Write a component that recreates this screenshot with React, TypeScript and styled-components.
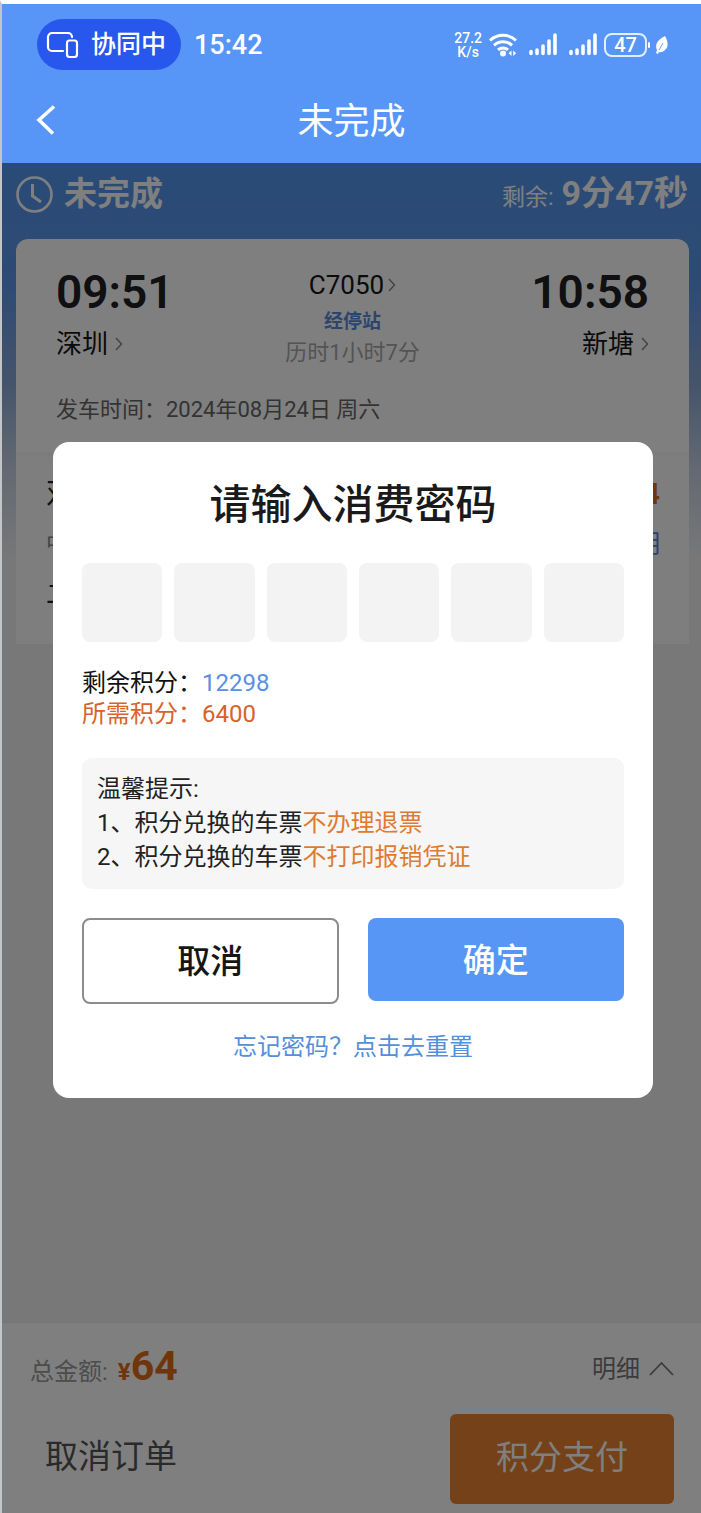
import React from 'react';
import styled, { createGlobalStyle } from 'styled-components';

const GlobalStyle = createGlobalStyle`
  * { box-sizing: border-box; }
  body { margin: 0; background: #fff; }
  body, button, input { font-family: Roboto, "Noto Sans CJK SC", sans-serif; }
  button { border: 0; padding: 0; background: none; color: inherit; cursor: pointer; }
  h1, h2, p { margin: 0; }
`;

const Screen = styled.div`
  display: flex;
  flex-direction: column;
  min-height: 100vh;
  border-top: 4px solid #fff;
  border-left: 2px solid #c3c6c8;
`;

const Top = styled.header`
  height: 159px;
  background: #5796f7;
  color: #fff;
`;

const StatusBar = styled.div`
  display: flex;
  align-items: center;
  justify-content: space-between;
  padding: 15px 33px 0 35px;
`;

const StatusGroup = styled.div<{ $gap: number }>`
  display: flex;
  align-items: center;
  gap: ${p => p.$gap}px;
`;

const SyncPill = styled.div`
  display: flex;
  align-items: center;
  gap: 12px;
  height: 51px;
  padding: 0 15px 0 9px;
  border-radius: 26px;
  background: #2857ee;
  font-size: 25px;
  font-weight: 500;
  line-height: 34px;
`;

const Clock = styled.span`
  font-size: 27px;
  font-weight: 500;
  line-height: 34px;
`;

const Speed = styled.span`
  display: flex;
  flex-direction: column;
  font-size: 14px;
  font-weight: 500;
  line-height: 14px;
  text-align: center;
`;

const Battery = styled.span`
  display: flex;
  align-items: center;
  gap: 1px;
`;

const BatteryBody = styled.span`
  width: 43px;
  height: 24px;
  border: 2px solid #e3eeff;
  border-radius: 8px;
  font-size: 20px;
  font-weight: 500;
  line-height: 21px;
  text-align: center;
`;

const BatteryNub = styled.span`
  width: 2px;
  height: 6px;
  border-radius: 1px;
  background: #fff;
`;

const NavBar = styled.div`
  display: grid;
  grid-template-columns: 66px 1fr 66px;
  align-items: center;
  height: 100px;
`;

const BackButton = styled.button`
  display: flex;
  padding-left: 33px;
`;

const NavTitle = styled.h1`
  padding-top: 4px;
  font-size: 36px;
  font-weight: 400;
  line-height: 48px;
  text-align: center;
`;

const Content = styled.main`
  position: relative;
  display: flex;
  flex: 1;
  flex-direction: column;
  background: linear-gradient(#5596f0 0, #5a96e8 120px, #8aa8d6 220px, #c4d0e4 300px, #f1f1f1 400px);
`;

const StateRow = styled.div`
  display: flex;
  align-items: center;
  justify-content: space-between;
  height: 76px;
  padding: 0 13px 14px 14px;
  color: #fff;
`;

const State = styled.div`
  display: flex;
  align-items: center;
  gap: 11px;
  font-size: 33px;
  font-weight: 700;
  line-height: 44px;
`;

const Remaining = styled.div`
  display: flex;
  align-items: baseline;
  gap: 8px;
  padding-top: 2px;
  font-size: 23px;
  line-height: 44px;

  strong {
    font-size: 34px;
  }
`;

const Card = styled.section<{ $kind: 'trip' | 'person' }>`
  margin: 0 12px 0 14px;
  padding: ${p => (p.$kind === 'trip' ? '28px 40px 0' : '18px 29px 0 30px')};
  height: ${p => (p.$kind === 'trip' ? 217 : 188)}px;
  border-radius: ${p => (p.$kind === 'trip' ? '12px 12px 0 0' : '0')};
  border-bottom: 4px solid ${p => (p.$kind === 'trip' ? '#f8f8f8' : '#fdfdfd')};
  background: ${p => (p.$kind === 'trip' ? '#fff' : '#fdfdfd')};
`;

const Trip = styled.div`
  display: flex;
  justify-content: space-between;
`;

const Stop = styled.div<{ $end?: boolean }>`
  display: flex;
  flex-direction: column;
  align-items: ${p => (p.$end ? 'flex-end' : 'flex-start')};
`;

const Time = styled.strong`
  color: #202024;
  font-size: 46px;
  font-weight: 600;
  line-height: 50px;
`;

const StationButton = styled.button`
  display: flex;
  align-items: center;
  gap: 7px;
  margin-top: 9px;
  color: #161616;
  font-size: 26px;
  line-height: 36px;
`;

const TrainInfo = styled.div`
  display: flex;
  flex-direction: column;
  align-items: center;
  color: #a8a8a8;
  font-size: 22px;
  line-height: 32px;
`;

const TrainButton = styled.button`
  display: flex;
  align-items: center;
  gap: 4px;
  color: #161616;
  font-size: 26px;
  line-height: 36px;
`;

const ViaButton = styled.button`
  padding: 5px 0 1px;
  color: #578bdc;
  font-size: 19px;
  font-weight: 700;
  line-height: 28px;
`;

const Depart = styled.p`
  margin-top: 25px;
  color: #666;
  font-size: 22px;
  line-height: 32px;
`;

const PersonRow = styled.div<{ $size: number; $color: string }>`
  display: flex;
  justify-content: space-between;
  height: 50px;
  color: ${p => p.$color};
  font-size: ${p => p.$size}px;
  line-height: 40px;
`;

const Price = styled.strong`
  color: #dd6c12;
`;

const RuleLink = styled.a`
  color: #4c86dd;
  font-size: 24px;
  text-decoration: none;
`;

const Bottom = styled.footer`
  margin-top: auto;
  padding: 0 27px 9px 28px;
  background: #fff;
  border-top: 1px solid #eaeaea;
`;

const TotalRow = styled.div`
  display: flex;
  align-items: center;
  justify-content: space-between;
  height: 91px;
`;

const Total = styled.div`
  display: flex;
  align-items: baseline;
  color: #999;
  font-size: 24px;
  line-height: 44px;
`;

const Amount = styled.strong<{ $size: number }>`
  color: #dc6c14;
  font-size: ${p => p.$size}px;

  &:first-of-type {
    margin-left: 10px;
  }
`;

const DetailButton = styled.button`
  display: flex;
  align-items: center;
  gap: 9px;
  color: #777;
  font-size: 24px;
  line-height: 32px;
`;

const ActionRow = styled.div`
  display: flex;
  align-items: center;
  justify-content: space-between;
`;

const CancelOrder = styled.button`
  padding: 0 15px 4px;
  color: #555;
  font-size: 33px;
  line-height: 44px;
`;

const PayButton = styled.button`
  width: 224px;
  height: 90px;
  padding-bottom: 8px;
  border-radius: 6px;
  background: #e88232;
  color: #fff;
  font-size: 33px;
`;

const Overlay = styled.div`
  position: absolute;
  inset: 0;
  padding: 279px 48px 0 51px;
  background: rgba(0, 0, 0, 0.5);
`;

const Dialog = styled.section`
  padding: 37px 29px 34px;
  border-radius: 16px;
  background: #fff;
`;

const DialogTitle = styled.h2`
  color: #1a1a1a;
  font-size: 41px;
  font-weight: 500;
  line-height: 52px;
  text-align: center;
`;

const PinRow = styled.div`
  display: grid;
  grid-template-columns: repeat(6, 1fr);
  gap: 12px;
  margin-top: 32px;
`;

const PinInput = styled.input`
  width: 100%;
  height: 79px;
  border: 0;
  border-radius: 8px;
  background: #f3f3f3;
  font-size: 34px;
  text-align: center;
`;

const Points = styled.div`
  margin-top: 26px;
  font-size: 24px;
  line-height: 31px;
`;

const PointLine = styled.p<{ $color: string }>`
  color: ${p => p.$color};
`;

const Blue = styled.span`
  color: #5b8fe4;
`;

const Tips = styled.div`
  margin-top: 28px;
  padding: 14px 15px 15px;
  border-radius: 10px;
  background: #f6f6f6;
  color: #222;
  font-size: 24px;
  line-height: 34px;
`;

const Warn = styled.span`
  color: #df7b30;
`;

const Choices = styled.div`
  display: grid;
  grid-template-columns: 1fr 1fr;
  align-items: start;
  gap: 29px;
  margin-top: 29px;
`;

const Choice = styled.button<{ $primary?: boolean }>`
  height: ${p => (p.$primary ? 83 : 86)}px;
  padding-bottom: 4px;
  border: ${p => (p.$primary ? '0' : '2px solid #8c8c8c')};
  border-radius: 8px;
  background: ${p => (p.$primary ? '#5796f4' : '#fff')};
  color: ${p => (p.$primary ? '#fff' : '#161616')};
  font-size: 33px;
  font-weight: 500;
`;

const ResetLink = styled.a`
  display: block;
  margin-top: 26px;
  color: #548fdc;
  font-size: 24px;
  line-height: 34px;
  text-align: center;
  text-decoration: none;
`;

const SyncIcon = () => (
  <svg width="33" height="28" viewBox="0 0 33 28" fill="none" stroke="#fff" strokeWidth="2.2" strokeLinecap="round" aria-hidden="true">
    <path d="M17 20H6a4 4 0 0 1-4-4V6a4 4 0 0 1 4-4h16a4 4 0 0 1 4 4" />
    <rect x="21" y="9.500" width="10" height="16.500" rx="2.500" />
  </svg>
);

const WifiIcon = () => (
  <svg width="28" height="24" viewBox="0 0 28 24" fill="none" stroke="#fff" strokeWidth="3" aria-hidden="true">
    <path d="M1 7.500a19 19 0 0 1 26 0" />
    <path d="M5 12.300a13 13 0 0 1 18 0" />
    <path d="M9 16.800a7.500 7.500 0 0 1 10 0" />
    <circle cx="14" cy="20.500" r="3" fill="#fff" stroke="none" />
    <path d="M22.500 17.500v5.500l-3-2.800zM24.200 17.500v5.500l3-2.800z" fill="#fff" stroke="none" />
  </svg>
);

const SignalIcon = () => (
  <svg width="28" height="23" viewBox="0 0 28 23" stroke="#fff" strokeWidth="3.600" strokeLinecap="round" aria-hidden="true">
    <path d="M2 18.500v2M8 17v3.500M14 13v7.500M20 8v12.500M26 2v18.500" />
  </svg>
);

const LeafIcon = () => (
  <svg width="13" height="20" viewBox="0 0 13 20" aria-hidden="true">
    <path d="M10 1c3 5 4 11 0 14-2 2-4 2.500-6 2l-1 2-2-1 1-3C-1 9 4 4 10 1z" fill="#fff" />
    <path d="M4 15L8 8" stroke="#5796f7" strokeWidth="0.900" />
  </svg>
);

const BackIcon = () => (
  <svg width="21" height="30" viewBox="0 0 21 30" fill="none" stroke="#fff" strokeWidth="3.600" aria-hidden="true">
    <path d="M19 1.500L4 15l14 13.500" />
  </svg>
);

const ClockIcon = () => (
  <svg width="37" height="37" viewBox="0 0 37 37" fill="none" stroke="#fff" strokeWidth="2.600" aria-hidden="true">
    <circle cx="18.500" cy="18.500" r="17" />
    <path d="M16.500 8v12l8.500 6" strokeWidth="3" />
  </svg>
);

const ArrowIcon = () => (
  <svg width="8" height="14" viewBox="0 0 8 14" fill="none" stroke="#888" strokeWidth="1.500" aria-hidden="true">
    <path d="M1 1l5.500 6L1 13" />
  </svg>
);

const UpIcon = () => (
  <svg width="25" height="15" viewBox="0 0 25 15" fill="none" stroke="#777" strokeWidth="1.800" aria-hidden="true">
    <path d="M1 14L12.500 2 24 14" />
  </svg>
);

export default function App() {
  return (
    <>
      <GlobalStyle />
      <Screen>
        <Top>
          <StatusBar>
            <StatusGroup $gap={13}>
              <SyncPill><SyncIcon />协同中</SyncPill>
              <Clock>15:42</Clock>
            </StatusGroup>
            <StatusGroup $gap={7}>
              <Speed><span>27.2</span><span>K/s</span></Speed>
              <StatusGroup $gap={12}><WifiIcon /><SignalIcon /><SignalIcon /></StatusGroup>
              <StatusGroup $gap={5}>
                <Battery><BatteryBody>47</BatteryBody><BatteryNub /></Battery>
                <LeafIcon />
              </StatusGroup>
            </StatusGroup>
          </StatusBar>
          <NavBar>
            <BackButton aria-label="返回"><BackIcon /></BackButton>
            <NavTitle>未完成</NavTitle>
          </NavBar>
        </Top>
        <Content>
          <StateRow>
            <State><ClockIcon />未完成</State>
            <Remaining>剩余: <strong>9分47秒</strong></Remaining>
          </StateRow>
          <Card $kind="trip">
            <Trip>
              <Stop>
                <Time>09:51</Time>
                <StationButton>深圳<ArrowIcon /></StationButton>
              </Stop>
              <TrainInfo>
                <TrainButton>C7050<ArrowIcon /></TrainButton>
                <ViaButton>经停站</ViaButton>
                <span>历时1小时7分</span>
              </TrainInfo>
              <Stop $end>
                <Time>10:58</Time>
                <StationButton>新塘<ArrowIcon /></StationButton>
              </Stop>
            </Trip>
            <Depart>发车时间：2024年08月24日 周六</Depart>
          </Card>
          <Card $kind="person">
            <PersonRow $size={30} $color="#222"><span>邓</span><Price>¥64</Price></PersonRow>
            <PersonRow $size={22} $color="#888"><span>中</span><RuleLink href="#rules">说明</RuleLink></PersonRow>
            <PersonRow $size={26} $color="#222"><span>二等座</span></PersonRow>
          </Card>
          <Bottom>
            <TotalRow>
              <Total>总金额:<Amount $size={24}>¥</Amount><Amount $size={41}>64</Amount></Total>
              <DetailButton>明细<UpIcon /></DetailButton>
            </TotalRow>
            <ActionRow>
              <CancelOrder>取消订单</CancelOrder>
              <PayButton>积分支付</PayButton>
            </ActionRow>
          </Bottom>
          <Overlay>
            <Dialog role="dialog" aria-modal="true" aria-labelledby="pin-title">
              <DialogTitle id="pin-title">请输入消费密码</DialogTitle>
              <PinRow>
                {[1, 2, 3, 4, 5, 6].map(n => (
                  <PinInput key={n} type="password" maxLength={1} inputMode="numeric" aria-label={`密码第${n}位`} />
                ))}
              </PinRow>
              <Points>
                <PointLine $color="#111">剩余积分：<Blue>12298</Blue></PointLine>
                <PointLine $color="#d9622b">所需积分：6400</PointLine>
              </Points>
              <Tips>
                <p>温馨提示:</p>
                <p>1、积分兑换的车票<Warn>不办理退票</Warn></p>
                <p>2、积分兑换的车票<Warn>不打印报销凭证</Warn></p>
              </Tips>
              <Choices>
                <Choice>取消</Choice>
                <Choice $primary>确定</Choice>
              </Choices>
              <ResetLink href="#reset">忘记密码？点击去重置</ResetLink>
            </Dialog>
          </Overlay>
        </Content>
      </Screen>
    </>
  );
}
